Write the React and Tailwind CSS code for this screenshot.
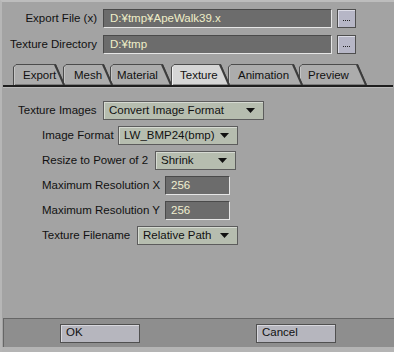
import React from "react";

const tabs = [
  { label: "Export", w: 52, cls: "ml-[13px] z-[6]", pl: "pl-[10px]" },
  { label: "Mesh", w: 50, cls: "-ml-[2px] z-[5]", pl: "pl-[11px]" },
  { label: "Material", w: 62, cls: "-ml-[3px] z-[4]", pl: "pl-[7px]" },
  { label: "Texture", w: 59, cls: "-ml-[1px] z-[10]", pl: "pl-[9px]", selected: true },
  { label: "Animation", w: 75, cls: "-ml-[2px] z-[2]", pl: "pl-[10px]" },
  { label: "Preview", w: 68, cls: "-ml-[4px] z-[1]", pl: "pl-[9px]" },
];

function Tab({ label, w, cls, pl, selected }) {
  const h = 21;
  const s = 9;
  const pts = `0.5,${h} 0.5,3 3,0.5 ${w - s - 0.5},0.5 ${w - 0.5},${h}`;
  return (
    <div className={`relative h-[21px] shrink-0 ${cls}`} style={{ width: w }}>
      <svg width={w} height={h} className="absolute left-0 top-0">
        <polygon points={pts} fill={selected ? "#d6d6d6" : "#acacac"} stroke="#4c4c4c" strokeWidth="1" />
        <line x1={w - s - 1} y1={0.5} x2={w - 1} y2={h} stroke="#3c3c3c" strokeWidth="2" />
        <line x1={1.5} y1={3} x2={1.5} y2={h} stroke={selected ? "#f0f0f0" : "#c4c4c4"} strokeWidth="1" />
      </svg>
      <span className={`relative block leading-[21px] pt-[1px] text-[#111] ${pl}`}>{label}</span>
    </div>
  );
}

function Arrow() {
  return (
    <svg width="9" height="5" className="shrink-0">
      <polygon points="0,0 9,0 4.5,5" fill="#111" />
    </svg>
  );
}

function Dropdown({ w, text }) {
  return (
    <div
      className={`${w} h-[19px] bg-[#b6bdaf] border border-[#5c5c5c] shadow-[inset_1px_1px_0_#d6dad2] flex items-center justify-between pl-[5px] pr-[8px] text-[#111]`}
    >
      <span className="leading-none whitespace-nowrap">{text}</span>
      <Arrow />
    </div>
  );
}

function NumInput({ value }) {
  return (
    <div className="w-[65px] h-[19px] bg-[#6c6c6c] border-t border-l border-t-[#4a4a4a] border-l-[#4a4a4a] border-b border-r border-b-[#e6e6e6] border-r-[#e6e6e6] flex items-center pl-[5px] text-[#f0efd0]">
      <span className="leading-none">{value}</span>
    </div>
  );
}

function Row({ indent, labelW, label, children }) {
  return (
    <div className={`flex items-center h-[19px] ${indent}`}>
      <div className={`${labelW} shrink-0 whitespace-nowrap text-[#111]`}>{label}</div>
      {children}
    </div>
  );
}

function DotButton() {
  return (
    <div className="w-[19px] h-[19px] bg-[#b6b6c6] border border-[#4e4e4e] shadow-[inset_1px_1px_0_#dcdce6] flex items-center justify-center gap-[1px] pt-[4px]">
      <span className="w-[1px] h-[1px] bg-[#222]" />
      <span className="w-[1px] h-[1px] bg-[#222]" />
      <span className="w-[1px] h-[1px] bg-[#222]" />
      <span className="w-[1px] h-[1px] bg-[#222]" />
    </div>
  );
}

function TopRow({ label, value }) {
  return (
    <div className="flex items-center h-[19px]">
      <div className="w-[97px] text-right whitespace-nowrap text-[#111]">{label}</div>
      <div className="ml-[6px] w-[229px] h-[19px] bg-[#6c6c6c] border-t border-l border-t-[#4a4a4a] border-l-[#4a4a4a] border-b border-r border-b-[#e6e6e6] border-r-[#e6e6e6] flex items-center pl-[6px] text-[#efeec8]">
        <span className="leading-none whitespace-nowrap">{value}</span>
      </div>
      <div className="ml-[5px]">
        <DotButton />
      </div>
    </div>
  );
}

function BigButton({ label }) {
  return (
    <div className="w-[80px] h-[19px] bg-[#b6b6be] border border-[#505050] shadow-[inset_1px_1px_0_#d8d8de] flex items-center pl-[5px] text-[#111]">
      <span className="leading-none">{label}</span>
    </div>
  );
}

export default function App() {
  return (
    <div
      className="w-[394px] h-[352px] bg-[#a3a3a3] flex flex-col border-t-2 border-t-[#bdbdbd] border-l-2 border-l-[#b6b6b6] text-[11.5px] overflow-hidden"
      style={{ fontFamily: '"Liberation Sans", Arial, sans-serif' }}
    >
      <div className="pt-[7px] flex flex-col gap-[7px] -ml-[2px]">
        <TopRow label="Export File (x)" value="D:¥tmp¥ApeWalk39.x" />
        <TopRow label="Texture Directory" value="D:¥tmp" />
      </div>

      <div className="mt-[10px] -ml-[2px] flex items-end">
        {tabs.map((t) => (
          <Tab key={t.label} {...t} />
        ))}
      </div>
      <div className="h-[2px] bg-[#1e1e1e] ml-[1px] mr-[1px]" />
      <div className="h-[1px] bg-[#bababa] ml-[1px] mr-[1px]" />

      <div className="flex-1 flex flex-col gap-[6px] pt-[13px] -ml-[2px]">
        <Row indent="pl-[18px]" labelW="w-[85px]" label="Texture Images">
          <Dropdown w="w-[161px]" text="Convert Image Format" />
        </Row>
        <Row indent="pl-[42px]" labelW="w-[76px]" label="Image Format">
          <Dropdown w="w-[120px]" text="LW_BMP24(bmp)" />
        </Row>
        <Row indent="pl-[42px]" labelW="w-[113px]" label="Resize to Power of 2">
          <Dropdown w="w-[81px]" text="Shrink" />
        </Row>
        <Row indent="pl-[42px]" labelW="w-[123px]" label="Maximum Resolution X">
          <NumInput value="256" />
        </Row>
        <Row indent="pl-[42px]" labelW="w-[123px]" label="Maximum Resolution Y">
          <NumInput value="256" />
        </Row>
        <Row indent="pl-[42px]" labelW="w-[95px]" label="Texture Filename">
          <Dropdown w="w-[101px]" text="Relative Path" />
        </Row>
      </div>

      <div className="h-[29px] ml-[1px] bg-[#8e8e8e] border-t border-t-[#666] border-l border-l-[#666] flex items-center">
        <div className="ml-[56px]">
          <BigButton label="OK" />
        </div>
        <div className="ml-[116px]">
          <BigButton label="Cancel" />
        </div>
      </div>
      <div className="h-[5px] bg-[#b4b4b4]" />
    </div>
  );
}
